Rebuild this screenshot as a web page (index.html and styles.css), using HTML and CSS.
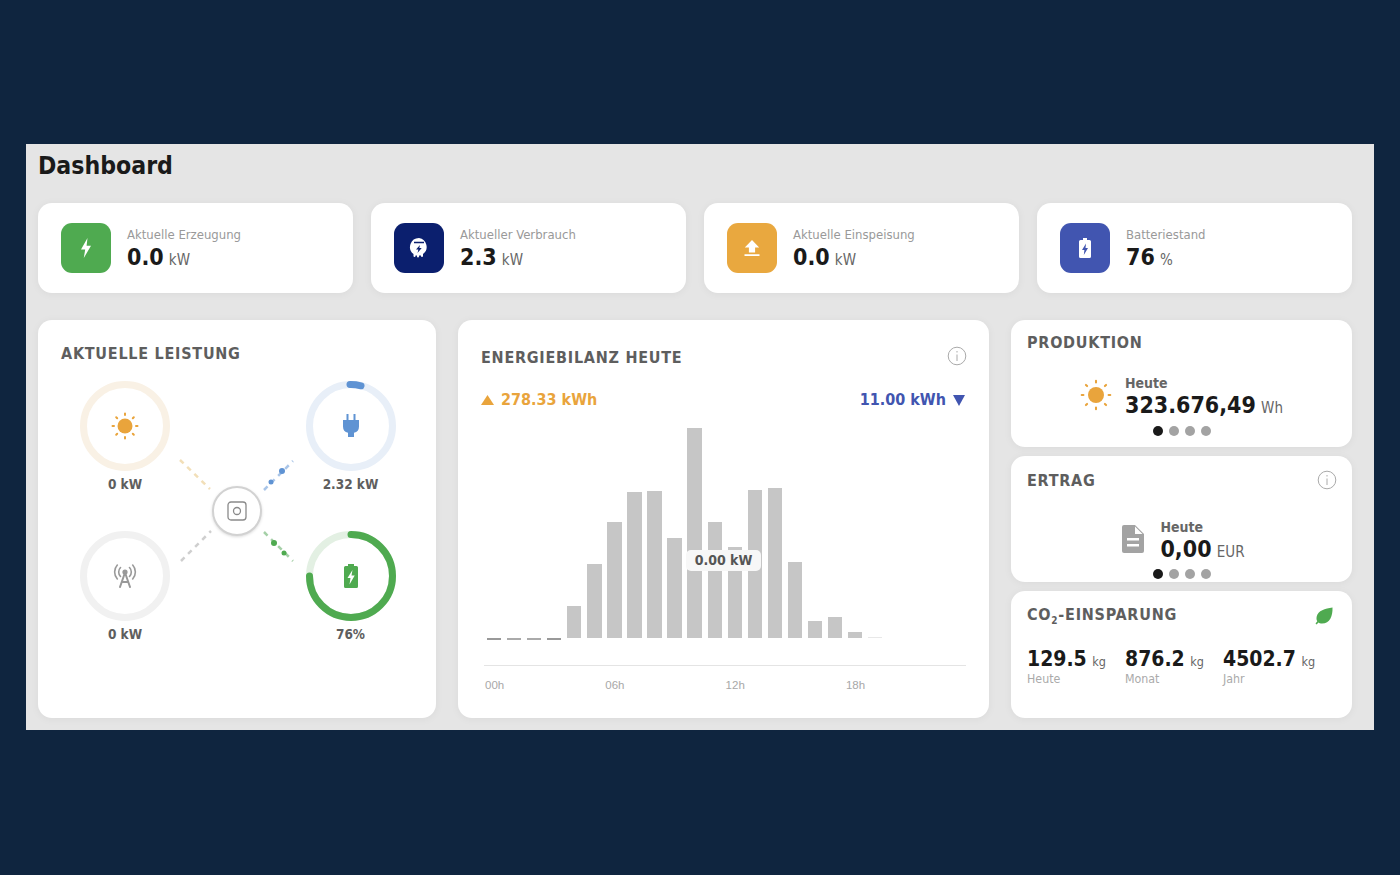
FILE: index.html
```html
<!DOCTYPE html>
<html lang="de">
<head>
    <meta charset="UTF-8">
    <title>Dashboard</title>
    <link rel="stylesheet" href="styles.css">
</head>
<body>
<div class="panel">
    <h1 class="page-title">Dashboard</h1>

    <div class="stats">
        <div class="stat">
            <div class="stat-icon green">
                <svg width="14" height="22" viewBox="0 0 14 22"><path fill="#fff" d="M8.5 1 2 12.5h4.2L4.8 21 12 8.8H7.6z"/></svg>
            </div>
            <div>
                <div class="stat-label">Aktuelle Erzeugung</div>
                <div class="stat-value">0.0 <span class="unit">kW</span></div>
            </div>
        </div>
        <div class="stat">
            <div class="stat-icon navy">
                <svg width="20" height="22" viewBox="0 0 20 22">
                    <path fill="#fff" d="M10 1a9 9 0 0 0-5.500 16.100V19a1 1 0 0 0 2 0v-.600h1.500v1.100a1 1 0 0 0 2 0v-1.100h2V19a1 1 0 0 0 2 0v-1.900A9 9 0 0 0 10 1z"/>
                    <path fill="#0b1f6e" d="M5 4.800h10v1.500H5zM11 8 7 12.500h2.400L8.500 16l4.200-5h-2.400z"/>
                </svg>
            </div>
            <div>
                <div class="stat-label">Aktueller Verbrauch</div>
                <div class="stat-value">2.3 <span class="unit">kW</span></div>
            </div>
        </div>
        <div class="stat">
            <div class="stat-icon orange">
                <svg width="16" height="18" viewBox="0 0 16 18"><path fill="#fff" d="M8 1 .8 8.500h4.100v5h6.200v-5h4.100zM.5 15.200h15V17H.5z"/></svg>
            </div>
            <div>
                <div class="stat-label">Aktuelle Einspeisung</div>
                <div class="stat-value">0.0 <span class="unit">kW</span></div>
            </div>
        </div>
        <div class="stat">
            <div class="stat-icon blue">
                <svg width="12" height="22" viewBox="0 0 12 22">
                    <path fill="#fff" d="M4 1h4v2h2.500A1.500 1.500 0 0 1 12 4.500v15a1.500 1.500 0 0 1-1.500 1.500h-9A1.500 1.500 0 0 1 0 19.500v-15A1.500 1.500 0 0 1 1.500 3H4z"/>
                    <path fill="#4155b0" d="M7 6.500 3 13h2.400L4.800 18 9 11H6.500z"/>
                </svg>
            </div>
            <div>
                <div class="stat-label">Batteriestand</div>
                <div class="stat-value">76 <span class="unit">%</span></div>
            </div>
        </div>
    </div>

    <div class="main">
        <div class="card power">
            <h2 class="card-title">Aktuelle Leistung</h2>
            <div class="flow">
                <svg class="flow-lines" width="354" height="300" viewBox="0 0 354 300">
                    <g fill="none" stroke-width="2.500" stroke-dasharray="5 5">
                        <line x1="119" y1="80" x2="149" y2="109" stroke="#f2dfb8"/>
                        <line x1="203" y1="110" x2="232" y2="81" stroke="#a9c5e8"/>
                        <line x1="120" y1="181" x2="150" y2="151" stroke="#cfcfcf"/>
                        <line x1="203" y1="152" x2="232" y2="181" stroke="#a5d0a7"/>
                    </g>
                    <circle cx="221" cy="91" r="3" fill="#5f93d3"/>
                    <circle cx="210" cy="102" r="2.500" fill="#5f93d3"/>
                    <circle cx="213" cy="163" r="3" fill="#4faa50"/>
                    <circle cx="223" cy="173" r="2.500" fill="#4faa50"/>
                </svg>
                <div class="hub">
                    <svg width="20" height="20" viewBox="0 0 20 20" fill="none" stroke="#8a8a8a" stroke-width="1.300">
                        <rect x="1" y="1" width="18" height="18" rx="3"/>
                        <circle cx="10" cy="10" r="3.500"/>
                    </svg>
                </div>
                <div class="node">
                    <div class="ring">
                        <svg class="ring-track" width="92" height="92" viewBox="0 0 92 92"><circle cx="46" cy="46" r="41.500" fill="none" stroke="#f9f1e5" stroke-width="7"/></svg>
                        <svg width="28" height="28" viewBox="0 0 28 28" fill="#e9a43c">
                            <circle cx="14" cy="14" r="7.500"/>
                            <g stroke="#e9a43c" stroke-width="2" stroke-linecap="round"><path d="M14 1.500v1.500M14 25v1.500M1.500 14H3M25 14h1.500M5.200 5.200l1 1M21.800 21.800l1 1M5.200 22.800l1-1M21.800 6.200l1-1"/></g>
                        </svg>
                    </div>
                    <div class="node-label">0 kW</div>
                </div>
                <div class="node">
                    <div class="ring">
                        <svg class="ring-track" width="92" height="92" viewBox="0 0 92 92">
                            <circle cx="46" cy="46" r="41.500" fill="none" stroke="#e8eff8" stroke-width="7"/>
                            <path d="M45 4.500A41.500 41.500 0 0 1 56 5.800" fill="none" stroke="#5f93d3" stroke-width="7" stroke-linecap="round"/>
                        </svg>
                        <svg width="16" height="24" viewBox="0 0 16 24" fill="#5f93d3"><path d="M3.500 0h2v6h5V0h2v6H16v6.500a6.500 6.500 0 0 1-5 6.300V23H5v-4.200a6.500 6.500 0 0 1-5-6.300V6h3.500z"/></svg>
                    </div>
                    <div class="node-label">2.32 kW</div>
                </div>
                <div class="node">
                    <div class="ring">
                        <svg class="ring-track" width="92" height="92" viewBox="0 0 92 92"><circle cx="46" cy="46" r="41.500" fill="none" stroke="#f1f1f1" stroke-width="7"/></svg>
                        <svg width="26" height="24" viewBox="0 0 26 24" fill="none" stroke="#999" stroke-width="1.600" stroke-linecap="round">
                            <circle cx="13" cy="8" r="2.600" fill="#999" stroke="none"/>
                            <path d="M8.500 12.500a6.500 6.500 0 0 1 0-9M17.500 3.500a6.500 6.500 0 0 1 0 9M5.300 15a10.500 10.500 0 0 1 0-14M20.700 1a10.500 10.500 0 0 1 0 14"/>
                            <path stroke-width="2" d="M12.500 10 8 23M13.500 10 18 23M10 18h6"/>
                        </svg>
                    </div>
                    <div class="node-label">0 kW</div>
                </div>
                <div class="node">
                    <div class="ring">
                        <svg class="ring-track" width="92" height="92" viewBox="0 0 92 92">
                            <circle cx="46" cy="46" r="41.500" fill="none" stroke="#e3f0e3" stroke-width="7"/>
                            <circle class="ring-fill" cx="46" cy="46" r="41.500" fill="none" stroke="#4faa50" stroke-width="7" stroke-linecap="round" pathLength="100" stroke-dasharray="75 100"/>
                        </svg>
                        <svg width="14" height="24" viewBox="0 0 14 24">
                            <path fill="#4faa50" d="M4 0h6v2h2.500A1.500 1.500 0 0 1 14 3.500v19a1.500 1.500 0 0 1-1.500 1.500h-11A1.500 1.500 0 0 1 0 22.500v-19A1.500 1.500 0 0 1 1.500 2H4z"/>
                            <path fill="#fff" d="M8.500 6 3.500 14h3L5.500 20.500 10.700 11.500H7.500z"/>
                        </svg>
                    </div>
                    <div class="node-label">76%</div>
                </div>
            </div>
        </div>

        <div class="card balance">
            <div class="card-head">
                <h2 class="card-title">Energiebilanz heute</h2>
                <svg class="info" width="20" height="20" viewBox="0 0 20 20"><circle cx="10" cy="10" r="8.800" fill="none" stroke="#aaa"/><path stroke="#aaa" d="M10 8.500v6.500M10 5v1.500"/></svg>
            </div>
            <div class="totals">
                <div class="total in">
                    <svg width="13" height="10" viewBox="0 0 13 10"><path fill="#e9a43c" d="M6.500 0 13 10H0z"/></svg>
                    278.33 kWh
                </div>
                <div class="total out">
                    11.00 kWh
                    <svg width="12" height="11" viewBox="0 0 12 11"><path fill="#4155b0" d="M0 0h12L6 11z"/></svg>
                </div>
            </div>
            <div class="chart">
                <div class="bars">
                    <div class="bar zero"></div>
                    <div class="bar zero thin"></div>
                    <div class="bar zero thin"></div>
                    <div class="bar zero"></div>
                    <div class="bar" style="height: 32px"></div>
                    <div class="bar" style="height: 74px"></div>
                    <div class="bar" style="height: 116px"></div>
                    <div class="bar" style="height: 146px"></div>
                    <div class="bar" style="height: 147px"></div>
                    <div class="bar" style="height: 100px"></div>
                    <div class="bar" style="height: 210px"></div>
                    <div class="bar" style="height: 116px"></div>
                    <div class="bar" style="height: 91px"></div>
                    <div class="bar" style="height: 148px"></div>
                    <div class="bar" style="height: 150px"></div>
                    <div class="bar" style="height: 76px"></div>
                    <div class="bar" style="height: 17px"></div>
                    <div class="bar" style="height: 21px"></div>
                    <div class="bar" style="height: 6px"></div>
                    <div class="bar faint" style="height: 1px"></div>
                    <div class="bar empty"></div>
                    <div class="bar empty"></div>
                    <div class="bar empty"></div>
                    <div class="bar empty"></div>
                </div>
                <div class="tooltip">0.00 kW</div>
                <div class="axis">
                    <span>00h</span>
                    <span>06h</span>
                    <span>12h</span>
                    <span>18h</span>
                </div>
            </div>
        </div>

        <div class="side">
            <div class="card mini">
                <h2 class="card-title">Produktion</h2>
                <div class="mini-body">
                    <svg class="mini-icon sun" width="32" height="32" viewBox="0 0 28 28" fill="#e9a43c">
                        <circle cx="14" cy="14" r="7"/>
                        <g stroke="#e9a43c" stroke-width="1.800" stroke-linecap="round"><path d="M14 1.500v1.500M14 25v1.500M1.500 14H3M25 14h1.500M5.200 5.200l1 1M21.800 21.800l1 1M5.200 22.800l1-1M21.800 6.200l1-1"/></g>
                    </svg>
                    <div>
                        <div class="mini-label">Heute</div>
                        <div class="mini-value">323.676,49 <span class="unit">Wh</span></div>
                    </div>
                </div>
                <div class="dots"><span class="dot active"></span><span class="dot"></span><span class="dot"></span><span class="dot"></span></div>
            </div>
            <div class="card mini revenue">
                <div class="card-head">
                    <h2 class="card-title">Ertrag</h2>
                    <svg class="info" width="20" height="20" viewBox="0 0 20 20"><circle cx="10" cy="10" r="8.800" fill="none" stroke="#aaa"/><path stroke="#aaa" d="M10 8.500v6.500M10 5v1.500"/></svg>
                </div>
                <div class="mini-body tall">
                    <svg class="mini-icon doc" width="22" height="28" viewBox="0 0 22 28">
                        <path fill="#a3a3a3" d="M2 0h11l9 9v17a2 2 0 0 1-2 2H2a2 2 0 0 1-2-2V2a2 2 0 0 1 2-2z"/>
                        <path fill="#fff" d="M13 1.500 20.500 9H13zM5 13h12v2.500H5zM5 19h12v2.500H5z"/>
                    </svg>
                    <div class="mini-text">
                        <div class="mini-label">Heute</div>
                        <div class="mini-value">0,00 <span class="unit">EUR</span></div>
                    </div>
                </div>
                <div class="dots low"><span class="dot active"></span><span class="dot"></span><span class="dot"></span><span class="dot"></span></div>
            </div>
            <div class="card mini co2">
                <div class="card-head">
                    <h2 class="card-title">CO<sub>2</sub>-Einsparung</h2>
                    <svg class="leaf" width="18" height="18" viewBox="0 0 18 18"><path fill="#4faa50" d="M17.500.5C17.800 9 15 16.500 7 16.500c-1.500 0-2.800-.4-3.600-1L1.700 17.500.5 16.500l1.800-2.200C1.500 13 1.300 11.500 1.700 9.500 3 3.500 10 1.800 17.500.5z"/></svg>
                </div>
                <div class="savings">
                    <div>
                        <div class="saving-value">129.5 <span class="unit small">kg</span></div>
                        <div class="saving-label">Heute</div>
                    </div>
                    <div>
                        <div class="saving-value">876.2 <span class="unit small">kg</span></div>
                        <div class="saving-label">Monat</div>
                    </div>
                    <div>
                        <div class="saving-value">4502.7 <span class="unit small">kg</span></div>
                        <div class="saving-label">Jahr</div>
                    </div>
                </div>
            </div>
        </div>
    </div>
</div>
</body>
</html>
```
FILE: styles.css
```css
* {
    box-sizing: border-box;
}

body {
    margin: 0;
    padding: 144px 26px 145px;
    background-color: #0f253f;
    font-family: "DejaVu Sans", "Noto Sans", sans-serif;
    font-stretch: condensed;
    color: #1a1a1a;
}

.panel {
    height: 586px;
    padding: 4px 22px 13px 12px;
    background-color: #e5e5e5;
}

.page-title {
    margin: 0 0 19px;
    height: 36px;
    font-size: 24.600px;
    line-height: 36px;
    font-weight: 700;
}

.stats {
    display: grid;
    grid-template-columns: repeat(4, 315px);
    gap: 18px;
    margin-bottom: 27px;
}

.stat {
    display: flex;
    align-items: center;
    gap: 16px;
    height: 90px;
    padding: 0 23px;
    background-color: #fff;
    border-radius: 14px;
    box-shadow: 0 1px 8px rgba(0, 0, 0, 0.05);
}

.stat-icon {
    display: flex;
    align-items: center;
    justify-content: center;
    width: 50px;
    height: 50px;
    border-radius: 11px;
}

.green { background-color: #4faa50; }
.navy { background-color: #0b1f6e; }
.orange { background-color: #e9a83f; }
.blue { background-color: #4155b0; }

.stat-label {
    font-size: 13px;
    line-height: 20px;
    color: #999;
}

.stat-value {
    font-size: 23px;
    line-height: 24px;
    font-weight: 700;
}

.unit {
    margin-left: -2px;
    font-size: 15px;
    font-weight: 400;
    color: #666;
}

.unit.small {
    margin-left: -1px;
    font-size: 12.500px;
}

.main {
    display: grid;
    grid-template-columns: 398px 531px 341px;
    gap: 22px;
    height: 397px;
}

.card {
    background-color: #fff;
    border-radius: 14px;
    box-shadow: 0 1px 8px rgba(0, 0, 0, 0.05);
}

.card-title {
    margin: 0;
    font-size: 16px;
    line-height: 22px;
    font-weight: 700;
    letter-spacing: 0.75px;
    text-transform: uppercase;
    color: #5e5e5e;
}

.card-title sub {
    font-size: 10px;
    line-height: 0;
}

.card-head {
    display: flex;
    align-items: center;
    justify-content: space-between;
}

.info {
    margin-right: -1px;
}

/* power flow */
.power {
    padding: 23px 22px 0 23px;
}

.flow {
    position: relative;
    display: grid;
    grid-template-columns: 92px 92px;
    justify-content: space-between;
    grid-auto-rows: 150px;
    width: 354px;
    margin-top: 15px;
    margin-left: -1px;
    padding: 0 17.500px 0 19px;
}

.flow-lines {
    position: absolute;
    top: 0;
    left: 1px;
}

.hub {
    position: absolute;
    top: 106px;
    left: 152px;
    display: flex;
    align-items: center;
    justify-content: center;
    width: 50px;
    height: 50px;
    background-color: #fff;
    border: 2px solid #d2d2d2;
    border-radius: 50%;
    box-shadow: 0 1px 3px rgba(0, 0, 0, 0.15);
}

.node {
    text-align: center;
}

.ring {
    position: relative;
    display: flex;
    align-items: center;
    justify-content: center;
    width: 92px;
    height: 92px;
}

.ring-track {
    position: absolute;
    top: 0;
    left: 0;
}

.ring-fill {
    transform: rotate(-90deg);
    transform-origin: 46px 46px;
}

.node-label {
    margin-top: 2px;
    font-size: 13.500px;
    line-height: 20px;
    font-weight: 700;
    color: #5e5e5e;
}

/* energy balance */
.balance {
    position: relative;
    padding: 27px 23px 0;
}

.balance .info {
    margin-top: -5px;
}

.totals {
    display: flex;
    justify-content: space-between;
    margin-top: 19px;
    font-size: 16px;
    line-height: 24px;
    font-weight: 700;
}

.total {
    display: flex;
    align-items: center;
    gap: 7px;
}

.total.in {
    color: #e9a43c;
}

.total.out {
    padding-right: 1px;
    color: #4155b0;
}

.chart {
    position: relative;
    margin-top: 14px;
    margin-left: 3px;
}

.bars {
    display: flex;
    align-items: flex-end;
    height: 212px;
    padding-left: 3px;
}

.bar {
    flex: none;
    width: 14.300px;
    margin-right: 5.750px;
    background-color: #c6c6c6;
}

.bar.zero {
    height: 2px;
    margin-bottom: -2px;
    background-color: #999;
}

.bar.thin {
    background-color: #aaa;
}

.bar.faint {
    background-color: #e8e8e8;
}

.bar.empty {
    height: 0;
}

.tooltip {
    position: absolute;
    top: 124px;
    left: 202px;
    width: 75px;
    height: 21px;
    font-size: 14px;
    line-height: 21px;
    font-weight: 700;
    text-align: center;
    color: #555;
    background-color: #f7f7f7;
    border-radius: 5px;
}

.axis {
    display: grid;
    grid-template-columns: repeat(4, 120.300px);
    margin-top: 27px;
    padding-top: 12px;
    border-top: 1px solid #e4e4e4;
    font-family: "Liberation Sans", sans-serif;
    font-size: 11.500px;
    line-height: 14px;
    color: #a8a8a8;
}

.axis span {
    padding-left: 1px;
}

/* right column */
.side {
    display: grid;
    grid-template-rows: 127px 126px 127px;
    gap: 9px;
}

.mini {
    position: relative;
    padding: 12px 16px 0;
}

.mini.revenue {
    padding-top: 14px;
}

.mini.revenue .info {
    margin-top: -3px;
}

.mini.co2 {
    padding-top: 13px;
}

.mini-body {
    display: flex;
    align-items: center;
    justify-content: center;
    gap: 13px;
    margin-top: 21px;
}

.mini-icon.sun {
    margin-top: -8px;
}

.mini-body.tall {
    gap: 16px;
    margin-top: 27px;
    padding-left: 4px;
}

.mini-icon.doc {
    margin-top: -8px;
}

.mini-label {
    font-size: 14px;
    line-height: 16px;
    font-weight: 700;
    color: #666;
}

.mini-value {
    font-size: 23px;
    line-height: 29px;
    font-weight: 700;
}

.dots {
    position: absolute;
    left: 0;
    right: 0;
    bottom: 11px;
    display: flex;
    justify-content: center;
    gap: 6px;
}

.dots.low {
    bottom: 3px;
}

.dot {
    width: 10px;
    height: 10px;
    border-radius: 50%;
    background-color: #a3a3a3;
}

.dot.active {
    background-color: #1a1a1a;
}

.leaf {
    margin: 2px 3px 0 0;
}

.savings {
    display: flex;
    gap: 19px;
    margin-top: 21px;
}

.saving-value {
    font-size: 21px;
    line-height: 24px;
    font-weight: 700;
}

.saving-label {
    margin-top: -2px;
    font-size: 12.300px;
    line-height: 14px;
    color: #aaa;
}
```
